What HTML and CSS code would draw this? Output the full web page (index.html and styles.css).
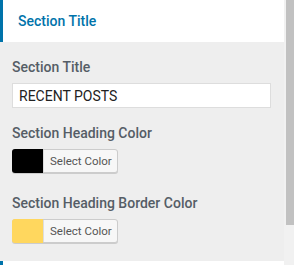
FILE: index.html
```html
<!DOCTYPE html>
<html lang="en">
<head>
    <meta charset="UTF-8">
    <meta name="viewport" content="width=device-width, initial-scale=1.0">
    <title>Section Title</title>
    <link rel="stylesheet" href="styles.css">
</head>
<body>
    <div class="frame">
        <div class="panel">
            <div class="section-head">
                <h3>Section Title</h3>
            </div>
            <div class="section-body">
                <div class="field field-text">
                    <label for="sectionTitle">Section Title</label>
                    <input id="sectionTitle" type="text" value="RECENT POSTS">
                </div>
                <div class="field field-color">
                    <label>Section Heading Color</label>
                    <button class="color-btn"><span class="swatch swatch-black"></span><span class="btn-text">Select Color</span></button>
                </div>
                <div class="field field-color">
                    <label>Section Heading Border Color</label>
                    <button class="color-btn"><span class="swatch swatch-yellow"></span><span class="btn-text">Select Color</span></button>
                </div>
            </div>
            <div class="section-head next"></div>
        </div>
        <div class="scroll-track">
            <div class="scroll-thumb"></div>
        </div>
    </div>
</body>
</html>
```

FILE: styles.css
```css
body {
    margin: 0;
    font-family: Roboto, "Liberation Sans", sans-serif;
    background-color: #ffffff;
    overflow: hidden;
}
.frame {
    display: flex;
    height: 265px;
    overflow: hidden;
}
.panel {
    width: 284px;
    display: flex;
    flex-direction: column;
}
.section-head {
    background-color: #ffffff;
    border-left: 3px solid #0073aa;
    height: 42px;
    padding-left: 15px;
    display: flex;
    align-items: center;
    flex-shrink: 0;
}
.section-head h3 {
    margin: 0 0 1px;
    font-size: 14px;
    font-weight: 500;
    color: #0073aa;
}
.section-body {
    background-color: #eeeeee;
    padding: 15px 13px 18px 12px;
}
.field label {
    display: block;
    font-size: 14px;
    font-weight: 500;
    color: #555d66;
    line-height: 20px;
    margin-bottom: 6px;
}
.field-text {
    margin-bottom: 15px;
}
.field-color {
    margin-bottom: 20px;
}
.field-color:last-child {
    margin-bottom: 0;
}
.field input {
    display: block;
    box-sizing: border-box;
    width: 100%;
    height: 25px;
    border: 1px solid #dddddd;
    background-color: #ffffff;
    padding: 0 6px;
    font-family: Roboto, "Liberation Sans", sans-serif;
    font-size: 14px;
    color: #222222;
    outline: none;
}
.color-btn {
    display: flex;
    align-items: stretch;
    box-sizing: border-box;
    height: 24px;
    padding: 0;
    border: 1px solid #cccccc;
    border-radius: 3px;
    background-color: #f7f7f7;
    box-shadow: 0 1px 0 #cccccc;
    cursor: pointer;
}
.swatch {
    width: 31px;
    margin: -1px 0 -1px -1px;
    border-radius: 3px 0 0 3px;
}
.swatch-black {
    background-color: #000000;
}
.swatch-yellow {
    background-color: #ffd75e;
}
.btn-text {
    display: flex;
    align-items: center;
    padding: 0 5px 0 6px;
    border-left: 1px solid #dddddd;
    font-family: Roboto, "Liberation Sans", sans-serif;
    font-size: 11.5px;
    color: #555555;
}
.scroll-track {
    width: 10px;
    background-color: #f1f1f1;
    padding-left: 2px;
    box-sizing: border-box;
}
.scroll-thumb {
    height: 225px;
    background-color: #c1c1c1;
}
```
